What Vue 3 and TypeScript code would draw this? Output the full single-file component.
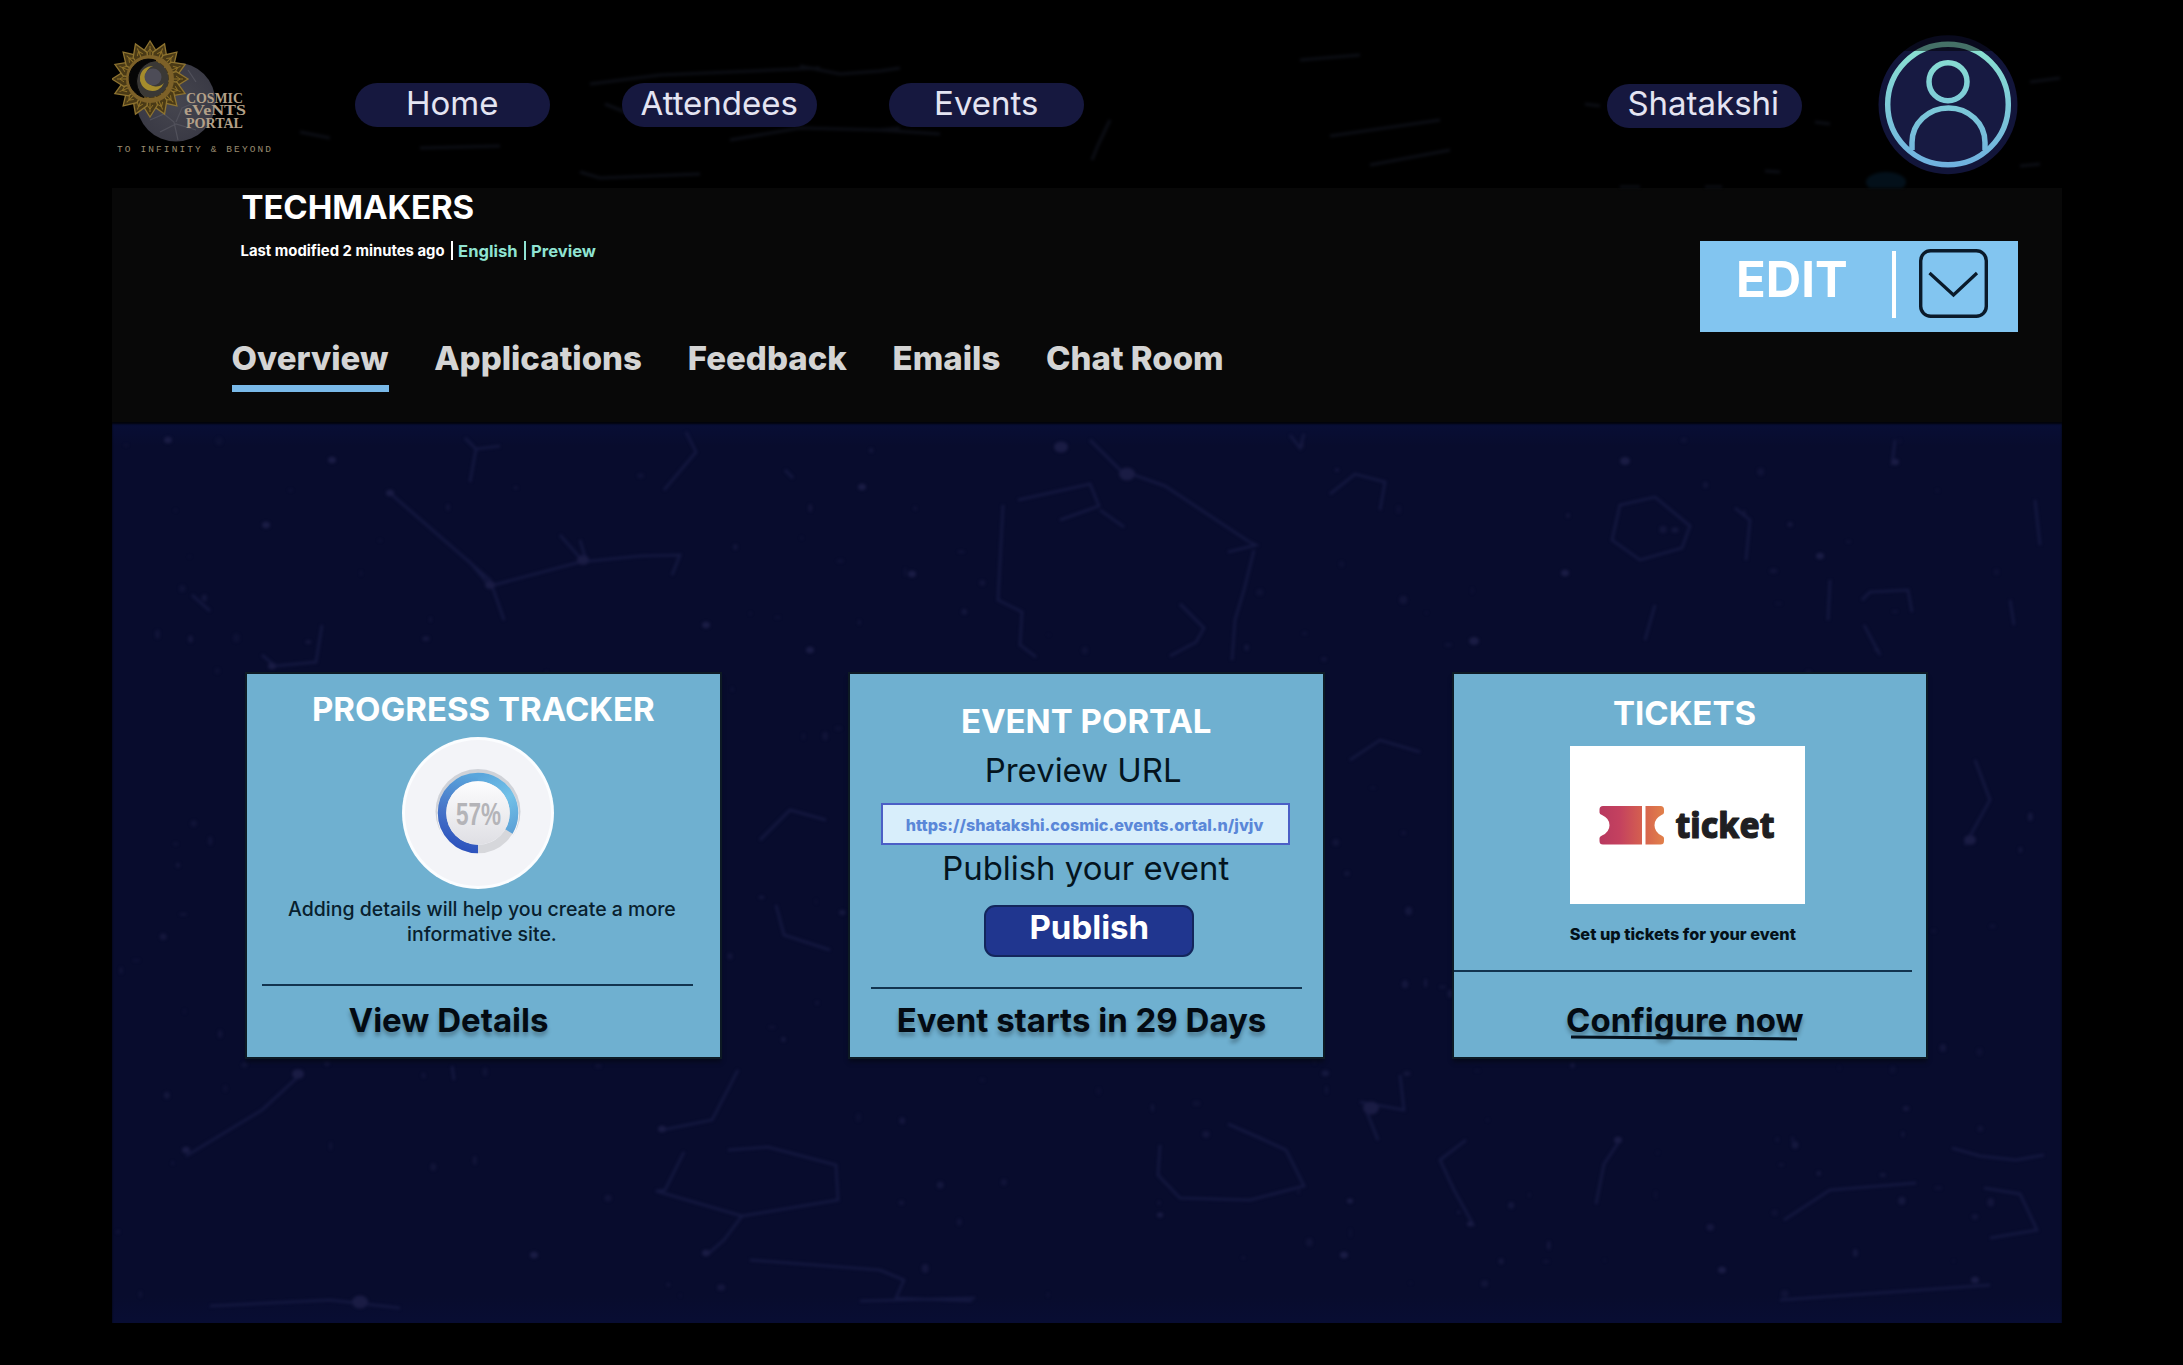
<script setup lang="ts">
const navItems = ['Home', 'Attendees', 'Events']
const tabs = ['Overview', 'Applications', 'Feedback', 'Emails', 'Chat Room']
const petals = Array.from({ length: 16 }, (_, i) => i * 22.5)

// Faint constellation drawn behind the cards, in page coordinates.
const threads: string[] = [
  'M465 438L476 449L470 482M476 449L500 446',
  'M686 432L696 452L664 490',
  'M391 494L490 580L504 620M468 560L490 586L580 562L640 556L680 555L672 575M560 535L582 560M580 540L586 560',
  'M192 595L210 611',
  'M322 625L316 662L275 666L262 655',
  'M785 470L793 478',
  'M1003 505L998 600L1022 612L1020 645L1036 657',
  'M1018 500L1090 484L1099 506L1060 520',
  'M1090 440L1120 470L1165 486L1248 541L1256 545L1228 552',
  'M1254 550L1244 590L1235 620L1232 660',
  'M1180 604L1204 628L1196 642L1170 656',
  'M1100 510L1124 527',
  'M1330 494L1355 474L1385 482L1380 510',
  'M1290 435L1300 448L1304 434',
  'M1620 505L1655 497L1690 526L1682 548L1640 560L1612 540Z',
  'M1735 508L1750 520L1746 560M1655 605L1645 640',
  'M1830 580L1828 620M1862 600L1870 592L1908 590L1912 612M1864 625L1880 655',
  'M1895 440L1892 465M2035 500L2040 545M2010 600L2014 625',
  'M300 1075L262 1110L186 1156M452 1066L454 1080',
  'M738 1070L712 1120L662 1130M684 1152L665 1190L656 1191L680 1198L742 1216L724 1240L708 1254M742 1216L838 1200L836 1165L768 1147L728 1150',
  'M750 1260L880 1270L904 1280L896 1298L972 1301',
  'M1228 1124L1260 1138L1286 1150L1304 1186L1250 1200L1180 1198L1158 1175L1160 1145',
  'M1366 1110L1378 1140M1466 1140L1440 1160L1454 1190L1474 1226',
  'M1620 1140L1604 1164L1596 1204',
  'M1784 1220L1830 1190L1916 1183M1984 1188L2020 1194L2037 1230L1990 1238',
  'M1952 1148L1980 1156L2016 1160L2044 1155',
  'M1400 1075L1404 1110L1360 1102M380 900L420 940M760 840L790 810L826 820',
  'M776 905L784 935L830 950M1350 760L1380 740L1420 752M1975 760L1990 800L1965 845',
  'M210 1306L330 1300L400 1308M860 1301L975 1298M1780 1300L1990 1285',
]
const specks: [number, number, number][] = [
  [168, 440, 4], [390, 493, 4], [490, 585, 5], [583, 560, 6], [332, 460, 4], [266, 525, 4],
  [706, 625, 4], [912, 574, 4], [862, 487, 4], [1061, 447, 7], [1127, 474, 8], [1565, 573, 4],
  [1625, 461, 5], [1820, 556, 4], [1895, 462, 4], [298, 1074, 6], [1371, 1108, 8], [1618, 1140, 4],
  [662, 1129, 4], [706, 1253, 4], [534, 1255, 4], [1344, 1255, 4], [360, 1302, 8], [1350, 1201, 3],
  [1722, 1270, 4], [1975, 1280, 4], [1470, 1224, 3], [810, 650, 4], [272, 666, 4], [1970, 840, 6],
  [1474, 641, 5], [1160, 1215, 3], [186, 1150, 4],
]
const sparks = [
  'M590 84L660 75L820 68M800 66L840 74L880 71L900 68M605 104L625 112L650 100',
  'M730 140L800 128L880 130L940 134M1110 120L1098 145L1092 160M420 148L500 146',
  'M580 172L600 178L700 174M880 130L900 128',
  'M1300 60L1360 55M1330 136L1440 120M1370 165L1450 150M1815 122L1830 124M1620 187L1640 187M1705 187L1722 187',
  'M1765 171L1780 172M2030 82L2060 78M2020 166L2040 164M300 132L330 138M1585 104L1600 106',
]

// Fine dust with a fixed seed, so the sky is the same on every load.
let seed = 7
const rand = () => (seed = (seed * 16807) % 2147483647) / 2147483647
const dust = Array.from({ length: 240 }, () => ({
  x: 118 + rand() * 1935,
  y: 440 + rand() * 860,
  rx: 1 + rand() * 3,
  ry: 1 + rand() * 3.5,
  o: 0.25 + rand() * 0.5,
}))
</script>

<template>
  <div class="screen">
    <header class="topbar">
      <svg class="sky" width="1950" height="188" viewBox="112 0 1950 188" aria-hidden="true">
        <path v-for="d in sparks" :key="d" :d="d" />
        <ellipse cx="1886" cy="182" rx="20" ry="10" fill="#03101a" stroke="none" />
      </svg>
      <svg class="logo" width="243" height="188" viewBox="112 0 243 188">
        <defs>
          <radialGradient id="moon"><stop offset="0" stop-color="#46464f" /><stop offset="1" stop-color="#3a3a45" /></radialGradient>
        </defs>
        <circle cx="176" cy="102" r="39.5" fill="url(#moon)" />
        <path d="M150 120l14-6 10 8 4 18M160 132l16-8 20 6M176 122l6-14 14-6M188 70l8 12" stroke="#51515b" stroke-width="1.2" fill="none" />
        <g transform="translate(150 79)">
          <path v-for="a in petals" :key="a" :transform="`rotate(${a})`" d="M0 -38L-7.5 -26L-5 -17H5L7.5 -26Z" fill="#4a3a16" stroke="#8f7430" stroke-width="1.3" />
          <path v-for="a in petals" :key="'i' + a" :transform="`rotate(${a})`" d="M0 -33V-20M-3 -26L0 -30L3 -26" fill="none" stroke="#8d7028" stroke-width="1" />
          <circle r="21.500" fill="none" stroke="#7d6128" stroke-width="5" />
          <circle r="18.500" fill="#3a3835" />
          <path d="M6 -18.500A19.500 19.500 0 1 0 -6 18.500A21 21 0 0 1 6 -18.500Z" fill="#060606" stroke="#060606" stroke-width="1" />
          <path d="M3 -13A12.500 12.500 0 1 0 14 4A10.500 10.500 0 1 1 3 -13Z" fill="#a58c2c" />
          <circle cx="3" cy="-2" r="8.500" fill="#4d4c57" />
        </g>
        <g class="brand">
          <text x="186" y="102.500" textLength="57" lengthAdjust="spacingAndGlyphs">COSMIC</text>
          <text x="184" y="115" textLength="62" lengthAdjust="spacingAndGlyphs">eVeNTS</text>
          <text x="186" y="127.500" textLength="57" lengthAdjust="spacingAndGlyphs">PORTAL</text>
        </g>
        <text class="tagline" x="117" y="152" textLength="154" lengthAdjust="spacing">TO INFINITY &amp; BEYOND</text>
      </svg>
      <nav class="nav">
        <a v-for="item in navItems" :key="item" class="pill">{{ item }}</a>
      </nav>
      <div class="account">
        <a class="pill">Shatakshi</a>
        <svg class="avatar" width="140" height="140" viewBox="1878 35 140 140">
          <defs>
            <linearGradient id="ring" gradientUnits="userSpaceOnUse" x1="0" y1="41" x2="0" y2="168">
              <stop offset="0" stop-color="#8be3cf" /><stop offset="1" stop-color="#6fb0e0" />
            </linearGradient>
          </defs>
          <circle cx="1948" cy="104.700" r="69.500" fill="#12153a" />
          <circle cx="1948" cy="104.700" r="62" fill="#171a42" />
          <g fill="none" stroke="url(#ring)" stroke-width="5.500">
            <circle cx="1948" cy="104.500" r="60.300" />
            <circle cx="1948" cy="81.700" r="19" />
            <path d="M1912 150V142.500A36.300 34.300 0 0 1 1985 142.500V150" />
          </g>
          <path d="M1878 35H2018V51H1878Z" fill="#000" fill-opacity=".5" />
        </svg>
      </div>
    </header>

    <section class="event">
      <div class="event-info">
        <h1>TECHMAKERS</h1>
        <p class="meta">
          <span class="modified">Last modified 2 minutes ago</span><i class="bar"></i><a>English</a><i class="bar mint"></i><a>Preview</a>
        </p>
        <div class="tabs">
          <a v-for="(tab, i) in tabs" :key="tab" :class="{ active: i === 0 }">{{ tab }}</a>
        </div>
      </div>
      <div class="edit">
        <span>EDIT</span>
        <i class="split"></i>
        <svg width="69" height="69" viewBox="0 0 69 69" fill="none" stroke="#0a1a2a">
          <rect x="1.700" y="1.700" width="65.600" height="65.600" rx="10" stroke-width="3.400" />
          <path d="M10.500 24L34.500 46L58 24" stroke-width="3.200" />
        </svg>
      </div>
    </section>

    <main class="board">
      <svg class="stars" width="1950" height="901" viewBox="112 422 1950 901" aria-hidden="true">
        <path v-for="d in threads" :key="d" :d="d" />
        <ellipse v-for="([x, y, r], i) in specks" :key="i" :cx="x" :cy="y" :rx="r" :ry="r * 0.8" />
        <ellipse v-for="(p, i) in dust" :key="'d' + i" :cx="p.x" :cy="p.y" :rx="p.rx" :ry="p.ry" :opacity="p.o" />
      </svg>

      <article class="card progress">
        <h2>PROGRESS TRACKER</h2>
        <svg class="gauge" width="152" height="152" viewBox="-76 -76 152 152">
          <defs>
            <linearGradient id="arcLeft" gradientUnits="userSpaceOnUse" x1="-20" y1="36" x2="0" y2="-36">
              <stop offset="0" stop-color="#2c52bd" /><stop offset=".45" stop-color="#4774c8" /><stop offset="1" stop-color="#5aa6dc" />
            </linearGradient>
            <linearGradient id="arcRight" gradientUnits="userSpaceOnUse" x1="0" y1="-36" x2="36" y2="20">
              <stop offset="0" stop-color="#5aa6dc" /><stop offset=".5" stop-color="#72c1e8" /><stop offset="1" stop-color="#5b9fd6" />
            </linearGradient>
            <linearGradient id="dial" x1="0" y1="0" x2="0" y2="1">
              <stop offset="0" stop-color="#fdfdfe" /><stop offset="1" stop-color="#dfdfe4" />
            </linearGradient>
          </defs>
          <circle r="76" fill="#fbfdff" />
          <circle r="73" fill="#f3f4f8" />
          <circle cy="-1.500" r="42.500" fill="#cfd2d8" />
          <circle cy="1.500" r="41" fill="#f3f4f8" />
          <circle r="36" fill="none" stroke="#d6d7db" stroke-width="8.500" />
          <path d="M0 36A36 36 0 0 1 0 -36" fill="none" stroke="url(#arcLeft)" stroke-width="8.500" />
          <path d="M0 -36A36 36 0 0 1 30.900 18.500" fill="none" stroke="url(#arcRight)" stroke-width="8.500" />
          <circle r="31.700" fill="url(#dial)" />
          <text x="-22" y="12" textLength="45" lengthAdjust="spacingAndGlyphs">57%</text>
        </svg>
        <p class="hint">Adding details will help you create a more<br />informative site.</p>
        <hr />
        <a class="action">View Details</a>
      </article>

      <article class="card portal">
        <h2>EVENT PORTAL</h2>
        <p class="label">Preview URL</p>
        <div class="url">https://shatakshi.cosmic.events.ortal.n/jvjv</div>
        <p class="label second">Publish your event</p>
        <button class="publish">Publish</button>
        <hr />
        <a class="action">Event starts in 29 Days</a>
      </article>

      <article class="card tickets">
        <h2>TICKETS</h2>
        <div class="ticket-art">
          <svg width="235" height="158" viewBox="0 0 235 158">
            <defs>
              <linearGradient id="stub" gradientUnits="userSpaceOnUse" x1="30" y1="0" x2="95" y2="0">
                <stop offset="0" stop-color="#b8395f" /><stop offset=".3" stop-color="#c4415f" /><stop offset=".65" stop-color="#d5604f" /><stop offset="1" stop-color="#e2824a" />
              </linearGradient>
            </defs>
            <g fill="url(#stub)">
              <path d="M33 60H72V98.500H33Q29.500 98.500 29.500 95V92Q29.500 90.500 32 89.500Q39.500 86 39.500 79.200T32 69Q29.500 68 29.500 66.500V63.500Q29.500 60 33 60Z" />
              <path d="M75.500 60H90.500Q94 60 94 63.500V66.500Q94 68 91.500 69Q84.500 72.500 84.500 79.200T91.500 89.500Q94 90.500 94 92V95Q94 98.500 90.500 98.500H75.500Z" />
            </g>
            <text x="105.500" y="91.500" textLength="99" lengthAdjust="spacingAndGlyphs">ticket</text>
          </svg>
        </div>
        <p class="hint">Set up tickets for your event</p>
        <hr />
        <a class="action">Configure now</a>
        <svg class="underline" width="228" height="6" viewBox="0 0 228 6"><path d="M1 2L227 4" stroke="#04101c" stroke-width="3" /></svg>
      </article>
    </main>
  </div>
</template>

<style>
body {
  margin: 0;
  background: #000;
}
</style>

<style scoped>
.screen {
  box-sizing: border-box;
  width: 2183px;
  height: 1365px;
  padding: 0 121px 0 112px;
  overflow: hidden;
  background: #000;
  font-family: Inter, 'Liberation Sans', sans-serif;
  white-space: nowrap;
}
h1, h2, p { margin: 0; }

.topbar {
  position: relative;
  display: flex;
  height: 188px;
}
.sky { position: absolute; inset: 0; fill: none; stroke: #0c0e15; stroke-width: 3; filter: blur(1.8px); }
.logo, .nav, .account { position: relative; }
.nav { display: flex; gap: 72.5px; padding-top: 83px; }
.pill {
  box-sizing: border-box;
  width: 194.500px;
  height: 44px;
  border-radius: 22px;
  background: #16183f;
  color: #e4e4f2;
  font-size: 33px;
  line-height: 40px;
  text-align: center;
}
.account { display: flex; margin-left: auto; padding-right: 44px; }
.account .pill { margin: 83.500px 76.500px 0 0; padding-right: 2px; line-height: 39px; }
.avatar { margin-top: 35px; }
.brand text { font: 700 14.500px 'Liberation Serif', serif; fill: #b3a088; }
.tagline { font: 400 9.500px 'Liberation Mono', monospace; fill: #9a8c70; }

.event {
  display: flex;
  justify-content: space-between;
  height: 234px;
  background: #080808;
}
.event-info { padding-left: 119.500px; }
h1 {
  margin: 0 0 0 10px;
  color: #fff;
  font-size: 33px;
  font-weight: 700;
  line-height: 38px;
  letter-spacing: -0.1px;
}
.meta {
  display: flex;
  align-items: center;
  height: 22px;
  margin: 13.500px 0 0 9px;
  color: #fff;
  font-size: 14.850px;
  font-weight: 700;
}
.meta a { color: #8fe3d2; font-size: 16.600px; }
.bar { width: 2.500px; height: 19px; margin: 0 5px 0 6px; background: #fff; }
.bar.mint { margin: 0 5px 0 6px; background: #8fe3d2; }
.tabs { display: flex; gap: 45.700px; margin-top: 74px; }
.tabs a {
  box-sizing: border-box;
  height: 56px;
  border-bottom: 7px solid transparent;
  color: #d4d4d4;
  font-size: 33px;
  font-weight: 800;
  line-height: 44px;
}
.tabs .active { border-color: #79b9e8; }
.edit {
  display: flex;
  width: 318px;
  height: 91px;
  margin: 52.500px 44px 0 0;
  background: #82c5f0;
}
.edit span {
  width: 156px;
  padding-left: 36px;
  color: #fff;
  font-size: 49px;
  font-weight: 700;
  line-height: 78px;
}
.split { width: 3.500px; height: 67px; margin: 10px 23px 0 0; background: #fff; }
.edit svg { margin-top: 8.500px; }

.board {
  position: relative;
  box-sizing: border-box;
  display: flex;
  gap: 130.500px;
  height: 901px;
  padding: 252px 0 0 135px;
  background: linear-gradient(#080e36, #080c2d 24px, #080c2d 97%, #080d33);
  box-shadow: inset 0 2px 2px #02040a;
}
.stars { position: absolute; inset: 0; fill: #1a1c44; stroke: #151941; stroke-width: 2.500; filter: blur(1.5px); }
.stars path { fill: none; }
.stars ellipse { stroke: none; }

.card {
  position: relative;
  display: flex;
  flex-direction: column;
  width: 472.800px;
  height: 382.500px;
  background: #6fb0d0;
  box-shadow: 0 0 0 2px #0d1a24, 0 4px 4px 1px #060a1c;
}
h2 {
  color: #fff;
  font-size: 33px;
  font-weight: 700;
  line-height: 40px;
  text-align: center;
}
hr { width: 431px; height: 2px; margin: 0; border: 0; background: #12344f; }
.action {
  height: 40px;
  color: #030a12;
  font-size: 33px;
  font-weight: 750;
  line-height: 40px;
  text-shadow: 0 4px 4px rgba(0, 0, 0, 0.3);
}

.progress h2 { margin-top: 15px; }
.gauge { margin: 8px 0 0 154.500px; }
.gauge text { font: 700 31px 'Liberation Sans', sans-serif; fill: #b4b4b8; }
.hint { color: #08202e; text-align: center; }
.progress .hint { margin: 7.500px 3px 0 0; font-size: 19.500px; font-weight: 500; line-height: 25px; }
.progress hr { margin: 37px 0 0 15px; }
.progress .action { margin: 14.500px 0 0 101.500px; }

.portal h2 { margin: 27px 1px 0 0; }
.label { margin: 9px 7px 0 0; color: #04141e; font-size: 32.900px; font-weight: 430; line-height: 40px; text-align: center; }
.url {
  box-sizing: border-box;
  width: 408.500px;
  height: 42px;
  margin: 13px 0 0 31px;
  padding-right: 2px;
  border: 2px solid #4b5fc6;
  background: #d8eefb;
  color: #5a87d8;
  font-size: 16.200px;
  font-weight: 800;
  line-height: 40px;
  text-align: center;
}
.label.second { margin: 3px 2px 0 0; }
.publish {
  box-sizing: border-box;
  width: 210px;
  height: 52px;
  margin: 17px 0 0 134px;
  padding: 0 0 7px;
  border: 2px solid #13265c;
  border-radius: 11px;
  background: #20368f;
  color: #fff;
  font: 750 33px / 1 Inter, sans-serif;
}
.portal hr { margin: 29.500px 0 0 20.500px; }
.portal .action { margin: 11.500px 0 0 46.500px; font-weight: 720; }

.tickets h2 { margin: 19px 11px 0 0; }
.ticket-art { width: 235px; height: 158px; margin: 13px 0 0 116px; background: #fff; }
.ticket-art text { font: 800 36px 'Noto Sans', sans-serif; fill: #1f1f22; stroke: #1f1f22; stroke-width: 1.2; stroke-linejoin: round; }
.tickets .hint { margin: 19.500px 14.500px 0 0; color: #041018; font-size: 16.300px; font-weight: 800; line-height: 20px; }
.tickets hr { width: 458px; margin-top: 26px; }
.tickets .action { margin: 28.500px 0 0 112.500px; font-weight: 700; }
.underline { position: absolute; left: 116.500px; top: 360.500px; }
</style>
